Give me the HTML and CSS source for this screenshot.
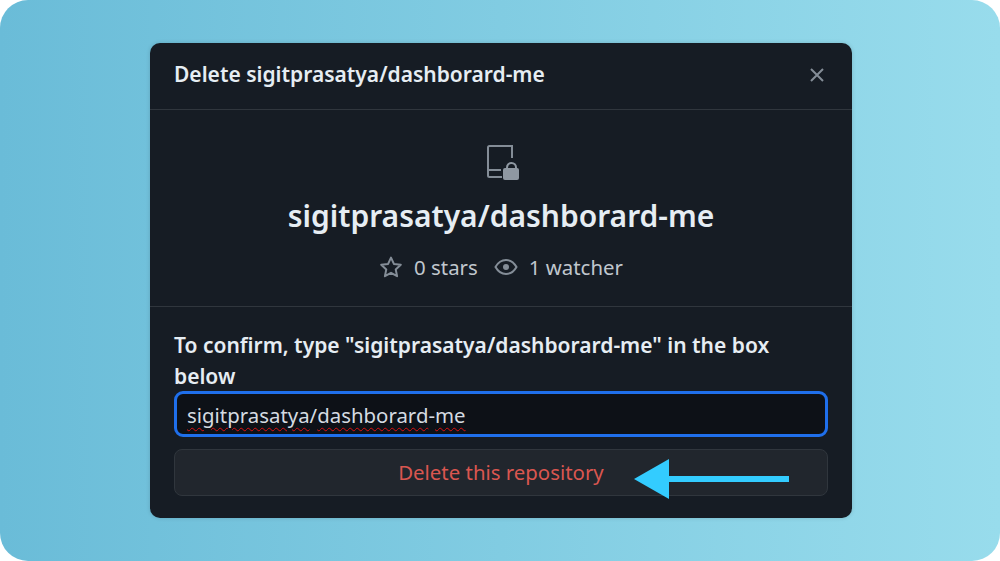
FILE: index.html
```html
<!DOCTYPE html>
<html>
	<head>
		<meta http-equiv="Content-Type" content="text/html; charset=utf-8">
		<title>Delete repository</title>
		<link rel="stylesheet" href="styles.css">
	</head>
	<body>
		<div class="backdrop">
			<div class="dialog">
				<div class="dialog-header">
					<h1 class="dialog-title">Delete sigitprasatya/dashborard-me</h1>
					<svg class="close-icon" width="16" height="16" viewBox="0 0 16 16">
						<path d="M2 2 14 14M14 2 2 14" fill="none" stroke="#848d97" stroke-width="2"/>
					</svg>
				</div>
				<div class="repo-info">
					<svg class="repo-icon" width="34" height="36" viewBox="0 0 34 36">
						<path d="M26 14V2H3.500A1.500 1.500 0 0 0 2 3.500v28A1.500 1.500 0 0 0 3.500 33H16M2 26h13" fill="none" stroke="#848d97" stroke-width="2"/>
						<path d="M21 24v-.5a4.500 4.500 0 0 1 9 0v.5" fill="none" stroke="#8f98a2" stroke-width="2"/>
						<rect x="17" y="24" width="16" height="12" rx="2" fill="#8f98a2"/>
					</svg>
					<h2 class="repo-name">sigitprasatya/dashborard-me</h2>
					<div class="repo-stats">
						<svg width="24" height="24" viewBox="0 0 24 24">
							<path d="M12 2.600 14.900 8.900 21.800 9.700 16.700 14.400 18.100 21.200 12 17.800 5.900 21.200 7.300 14.400 2.200 9.700 9.100 8.900Z" fill="none" stroke="#848d97" stroke-width="2" stroke-linejoin="round"/>
						</svg>
						<span class="stat-text">0 stars</span>
						<svg class="eye-icon" width="24" height="24" viewBox="0 0 24 24">
							<path d="M1.500 12C4 7.500 7.500 5 12 5S20 7.500 22.500 12C20 16.500 16.500 19 12 19S4 16.500 1.500 12Z" fill="none" stroke="#848d97" stroke-width="2"/>
							<circle cx="12" cy="12" r="3" fill="#848d97"/>
						</svg>
						<span class="stat-text">1 watcher</span>
					</div>
				</div>
				<div class="confirm">
					<label class="confirm-label">To confirm, type "sigitprasatya/dashborard-me" in the box below</label>
					<div class="confirm-input"><span class="typo">sigitprasatya</span>/<span class="typo">dashborard</span>-<span class="typo">me</span></div>
					<div class="delete-btn">Delete this repository</div>
					<svg class="arrow" width="156" height="40" viewBox="0 0 156 40">
						<path d="M0 20 35 0V17H155V23H35V40Z" fill="#33ccff"/>
					</svg>
				</div>
			</div>
		</div>
	</body>
</html>
```

FILE: styles.css
```css
html, body {
	margin: 0;
	padding: 0;
	height: 100%;
	background: #fff;
	font-family: "Noto Sans", sans-serif;
}

.backdrop {
	height: 561px;
	border-radius: 28px;
	background: linear-gradient(90deg, #6abcd8, #98dcec);
	display: flex;
	justify-content: center;
	padding: 43px 0 0 2px;
	box-sizing: border-box;
}

.dialog {
	width: 702px;
	height: 475px;
	background: #161c24;
	border-radius: 10px;
	box-shadow: 0 0 4px rgba(0, 0, 0, .15);
	color: #e6edf3;
	display: flex;
	flex-direction: column;
}

.dialog-header {
	height: 67px;
	flex: none;
	box-sizing: border-box;
	border-bottom: 1px solid #30363d;
	padding: 0 27px 0 24px;
	display: flex;
	align-items: center;
	justify-content: space-between;
}

.dialog-title {
	margin: 0 0 4px;
	font-size: 21px;
	font-weight: 600;
}

.close-icon {
	margin-top: -3px;
}

.repo-info {
	height: 197px;
	flex: none;
	box-sizing: border-box;
	border-bottom: 1px solid #30363d;
	padding-top: 34px;
	display: flex;
	flex-direction: column;
	align-items: center;
}

.repo-icon {
	margin-left: 4px;
}

.repo-name {
	margin: 17px 0 0;
	font-size: 30px;
	line-height: 38px;
	font-weight: 600;
}

.repo-stats {
	margin-top: 19px;
	display: flex;
	align-items: center;
	height: 26px;
	color: #c0c7ce;
	font-size: 20.400px;
}

.stat-text {
	margin-left: 11px;
}

.eye-icon {
	margin-left: 16px;
}

.confirm {
	position: relative;
	padding: 23px 24px 0;
}

.confirm-label {
	display: block;
	font-size: 21px;
	line-height: 31px;
	font-weight: 600;
}

.confirm-input {
	margin-top: -1px;
	height: 46px;
	box-sizing: border-box;
	border: 3px solid #1f6feb;
	border-radius: 9px;
	background: #0d1117;
	padding-left: 10px;
	line-height: 42px;
	font-size: 20.400px;
	color: #d5dbe1;
}

.typo {
	text-decoration: underline wavy #e01010 1px;
	text-underline-offset: 4px;
}

.delete-btn {
	margin-top: 12px;
	height: 47px;
	box-sizing: border-box;
	border: 1px solid #30363d;
	border-radius: 8px;
	background: #21262d;
	color: #da5650;
	font-size: 20.400px;
	line-height: 45px;
	text-align: center;
}

.arrow {
	position: absolute;
	left: 484px;
	top: 152px;
}
```
